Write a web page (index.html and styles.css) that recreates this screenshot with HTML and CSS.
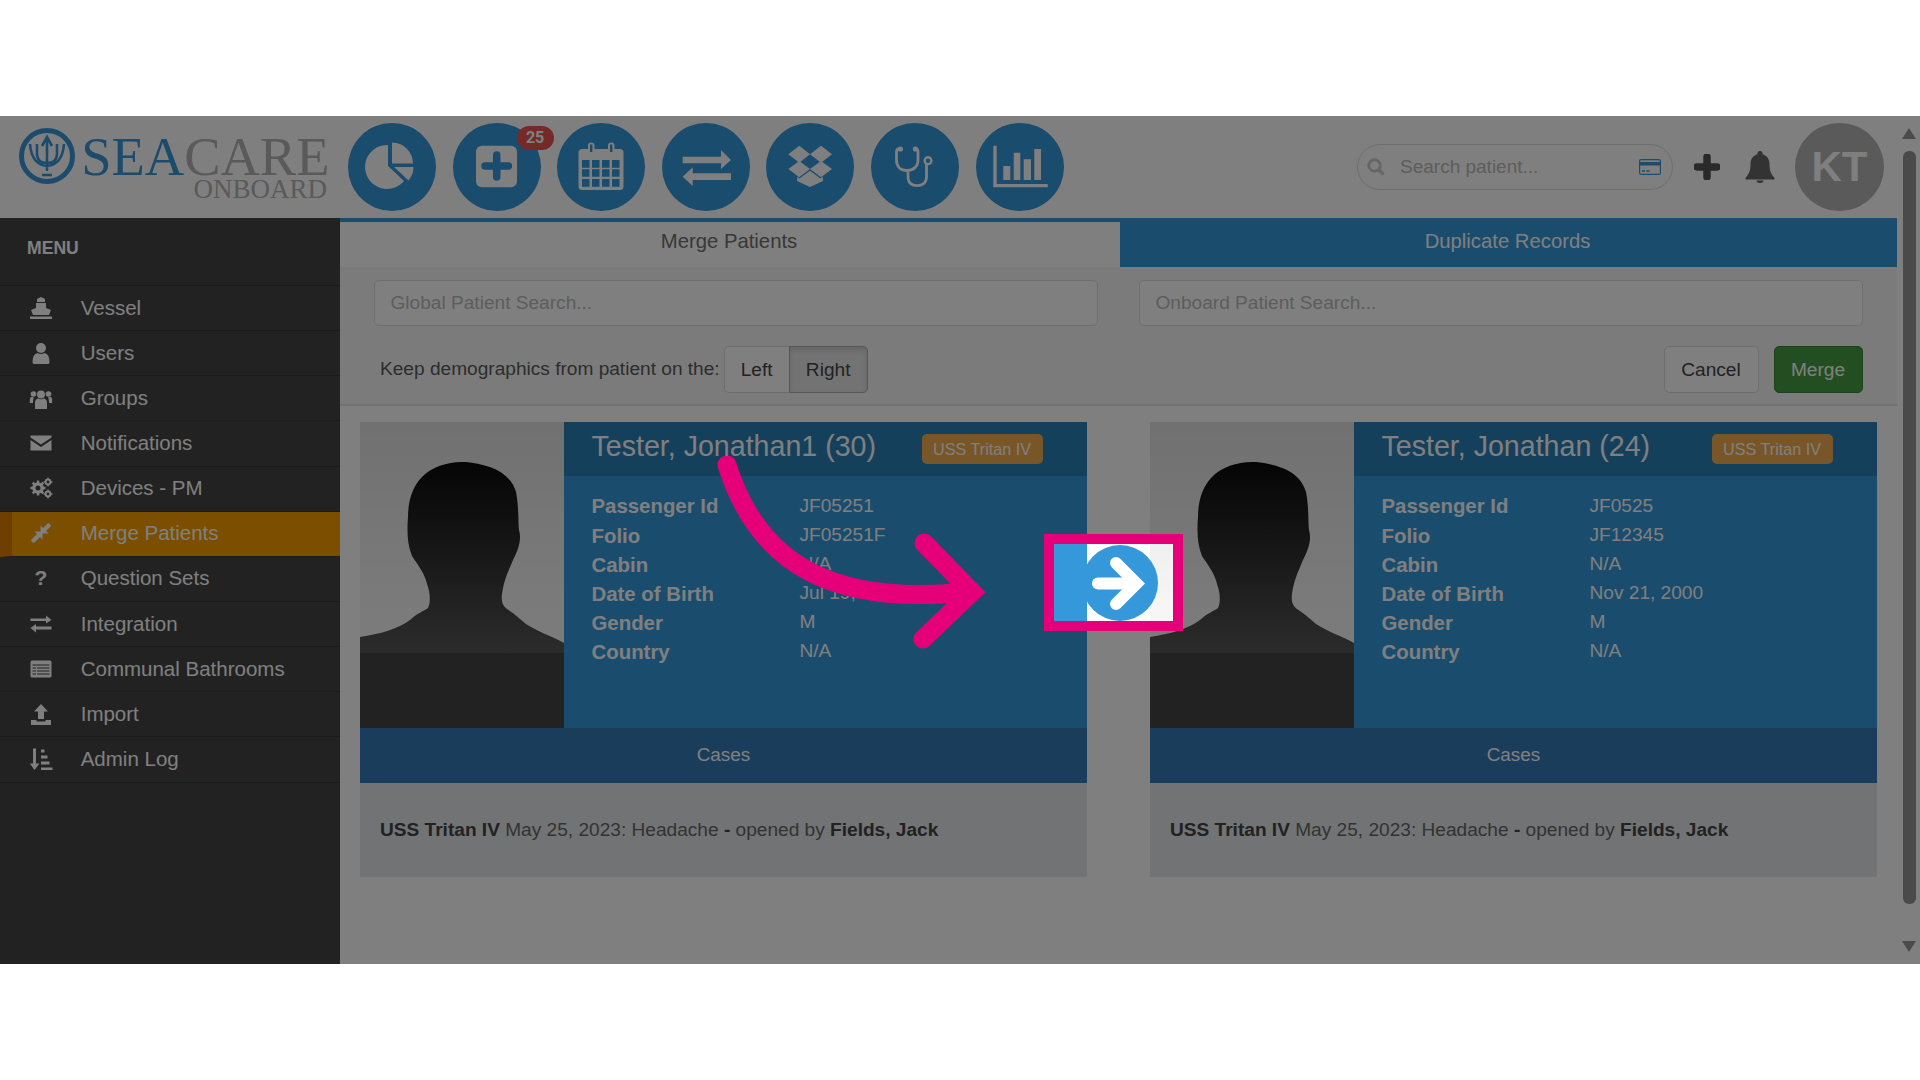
FILE: index.html
```html
<!DOCTYPE html>
<html lang="en">
<head>
    <meta charset="UTF-8">
    <title>Merge Patients</title>
    <link rel="stylesheet" href="styles.css">
</head>
<body>
<div class="frame">
    <div class="page">
        <header class="topbar">
            <div class="logo">
                <svg class="logo-mark" viewBox="0 0 58 58" width="58" height="58">
                    <circle cx="29" cy="29" r="25.5" fill="none" stroke="#3a96d6" stroke-width="5"/>
                    <path d="M29 44V11M24 19l5-9 5 9M19 17v10c0 6 4 9 10 9s10-3 10-9V17M12 17c1 13 6 21 17 22 11-1 16-9 17-22M24 48h10" fill="none" stroke="#3a96d6" stroke-width="2.6"/>
                </svg>
                <div class="logo-text">
                    <div class="logo-name"><span class="logo-sea">SEA</span>CARE</div>
                    <div class="logo-sub">ONBOARD</div>
                </div>
            </div>
            <nav class="nav-btns">
                <a class="nav-btn">
                    <svg viewBox="0 0 88 88"><path d="M40 22A22 22 0 1 0 56 58L40 43Z" fill="#fff"/><path d="M44 19.5A21 21 0 0 1 65 40.5H44Z" fill="#fff"/><path d="M46 44H65.5A21 21 0 0 1 60.5 57.5Z" fill="#fff"/></svg>
                </a>
                <a class="nav-btn">
                    <svg viewBox="0 0 88 88"><rect x="23" y="22.7" width="41" height="41.6" rx="6" fill="#fff"/><path d="M43.7 32v22M32 43h23.400" stroke="#3498db" stroke-width="7.500" stroke-linecap="round"/></svg>
                    <span class="nav-badge">25</span>
                </a>
                <a class="nav-btn">
                    <svg viewBox="0 0 88 88">
                        <rect x="21.500" y="26" width="45" height="41" rx="3.500" fill="#fff"/>
                        <rect x="31" y="19.500" width="6.500" height="11.500" rx="3.200" fill="#fff"/>
                        <rect x="51" y="19.500" width="6.500" height="11.500" rx="3.200" fill="#fff"/>
                        <rect x="33" y="21.500" width="2.400" height="7.500" fill="#3498db"/>
                        <rect x="53" y="21.500" width="2.400" height="7.500" fill="#3498db"/>
                        <path d="M25 37h7.500v7.700H25zM35 37h7.500v7.700H35zM45 37h7.500v7.700H45zM55 37h7.500v7.700H55zM25 46.300h7.500v7.500H25zM35 46.300h7.500v7.500H35zM45 46.300h7.500v7.500H45zM55 46.300h7.500v7.500H55zM25 56h7.500v7.700H25zM35 56h7.500v7.700H35zM45 56h7.500v7.700H45zM55 56h7.500v7.700H55z" fill="#3498db"/>
                    </svg>
                </a>
                <a class="nav-btn">
                    <svg viewBox="0 0 88 88"><path d="M20.700 33.700H59V27L69 37 59 46V40.300H20.700Z" fill="#fff"/><path d="M69 50.300H30.700V44.300L20.700 53.700 30.700 63V57H69Z" fill="#fff"/></svg>
                </a>
                <a class="nav-btn">
                    <svg viewBox="0 0 88 88"><path d="M22.300 31.300 33.300 22.700 44 31.300 33.300 39.700ZM44 31.300 55 22.700 66 31.300 55 39.700ZM22.300 46 33.300 38 44 46 33.300 54.300ZM44 46 55 38 66 46 55 54.300ZM31.300 53.700 33.500 55.500 44 47.700 54.500 55.500 57 53.700V58L44 64 31 58Z" fill="#fff"/></svg>
                </a>
                <a class="nav-btn">
                    <svg viewBox="0 0 88 88">
                        <path d="M29 26H28Q25.500 26 25.500 29V37C25.500 44 30 47.500 36 47.500S47 44 47 37V29Q47 26 44.500 26H44M37 47.500V54C37 60 41 62.700 46 62.700S55.500 60 55.500 54V41" fill="none" stroke="#fff" stroke-width="2.800"/>
                        <circle cx="29.400" cy="26" r="2.600" fill="#fff"/><circle cx="44.400" cy="26" r="2.600" fill="#fff"/>
                        <circle cx="57" cy="37.700" r="3.400" fill="none" stroke="#fff" stroke-width="2.400"/>
                    </svg>
                </a>
                <a class="nav-btn">
                    <svg viewBox="0 0 88 88"><path d="M17.300 22.700H20.700V61H71.700V64.300H17.300ZM27.300 43H34.300V57H27.300ZM37.700 29.700H44.300V57H37.700ZM47.700 36.300H55V57H47.700ZM58.300 26H65V57H58.300Z" fill="#fff"/></svg>
                </a>
            </nav>
            <div class="topbar-right">
                <div class="patient-search">
                    <svg class="search-icon" viewBox="0 0 18 18" width="18" height="18"><circle cx="7.500" cy="7.500" r="5.700" fill="none" stroke="#ccc" stroke-width="3"/><path d="M11.700 11.700 16.500 16.500" stroke="#ccc" stroke-width="3.400"/></svg>
                    <span class="search-text">Search patient...</span>
                    <svg class="card-icon" viewBox="0 0 22 16" width="22" height="16"><rect x=".6" y=".6" width="20.800" height="14.800" rx="1.500" fill="none" stroke="#3498db" stroke-width="1.200"/><rect x="1" y="3" width="20" height="3.500" fill="#3498db"/><path d="M3 12h3M7.500 12h3" stroke="#3498db" stroke-width="1.300"/></svg>
                </div>
                <svg class="plus-icon" viewBox="0 0 26 26" width="26" height="26"><path d="M13 3v20M3 13h20" stroke="#555" stroke-width="7.500" stroke-linecap="round"/></svg>
                <svg class="bell-icon" viewBox="0 0 30 32" width="30" height="32"><path d="M15 0a2.500 2.500 0 0 1 2.500 3.200C22 4.500 24.500 8 24.500 13c0 8 2.500 11 5 14v1.500H.5V27c2.500-3 5-6 5-14 0-5 2.500-8.500 7-9.800A2.500 2.500 0 0 1 15 0ZM11.500 29.500h7a3.500 2.500 0 0 1-7 0Z" fill="#666"/></svg>
                <div class="avatar">KT</div>
            </div>
        </header>

        <div class="main">
            <aside class="sidebar">
                <div class="menu-title">MENU</div>
                <a class="menu-item">
                    <svg viewBox="0 0 24 24"><path d="M12 1l4 2v3H8V3ZM7 7h10v5l5 2-2 5H4l-2-5 5-2Z M1 20.500h22v2.500H1Z" fill="#fff"/></svg>
                    Vessel
                </a>
                <a class="menu-item">
                    <svg viewBox="0 0 24 24"><circle cx="12" cy="7" r="5" fill="#fff"/><path d="M5 23q-1.500 0-1.500-2 0-8 5-9 3 2 7 0 5 1 5 9 0 2-1.500 2Z" fill="#fff"/></svg>
                    Users
                </a>
                <a class="menu-item">
                    <svg viewBox="0 0 24 24"><circle cx="12" cy="8.500" r="4" fill="#fff"/><circle cx="4.500" cy="8" r="2.800" fill="#fff"/><circle cx="19.500" cy="8" r="2.800" fill="#fff"/><path d="M6 23v-6q0-4 3-4.500 3 1.500 6 0 3 .5 3 4.500v6ZM.8 17v-3q0-3 2-3.200 1.200.8 2.200.8-1 1.500-1 4.500v1ZM23.200 17v-3q0-3-2-3.200-1.200.8-2.200.8 1 1.500 1 4.500v1Z" fill="#fff"/></svg>
                    Groups
                </a>
                <a class="menu-item">
                    <svg viewBox="0 0 24 24"><path d="M1.500 4.500h21v2L12 13.500 1.500 6.500ZM1.500 9l10.500 7 10.500-7v10.500h-21Z" fill="#fff"/></svg>
                    Notifications
                </a>
                <a class="menu-item">
                    <svg viewBox="0 0 24 24">
                        <path d="M9 4.500v15M1.500 12h15M3.700 6.700l10.600 10.600M14.300 6.700 3.700 17.300" stroke="#fff" stroke-width="2.400"/>
                        <circle cx="9" cy="12" r="5.800" fill="#fff"/><circle cx="9" cy="12" r="2.500" fill="#444"/>
                        <path d="M19 1.500v9M14.500 6h9M19 13.500v9M14.500 18h9" stroke="#fff" stroke-width="1.400"/>
                        <circle cx="19" cy="6" r="2.400" fill="#444" stroke="#fff" stroke-width="2"/><circle cx="19" cy="18" r="2.400" fill="#444" stroke="#fff" stroke-width="2"/>
                    </svg>
                    Devices - PM
                </a>
                <a class="menu-item active">
                    <svg viewBox="0 0 24 24"><path d="M3 21 2 19l6-6-2.500-2.500h8v8L11 16l-6 6ZM21 3l1 2-5 5 2.500 2.500h-8v-8L14 7l5-5Z" fill="#fff"/></svg>
                    Merge Patients
                </a>
                <a class="menu-item">
                    <span class="menu-glyph">?</span>
                    Question Sets
                </a>
                <a class="menu-item">
                    <svg viewBox="0 0 24 24"><path d="M1.500 6.500H17V3.500L22.500 8 17 11.500V9H1.500ZM22.500 14.500H7V12L1.500 16 7 20.500V17.500H22.500Z" fill="#fff"/></svg>
                    Integration
                </a>
                <a class="menu-item">
                    <svg viewBox="0 0 24 24"><rect x="1.500" y="3.500" width="21" height="17" rx="1.500" fill="#fff"/><path d="M3.500 8h17M3.500 11h3.500M8 11h12.500M3.500 14h3.500M8 14h12.500M3.500 17h3.500M8 17h12.500" stroke="#444" stroke-width="1.200"/></svg>
                    Communal Bathrooms
                </a>
                <a class="menu-item">
                    <svg viewBox="0 0 24 24"><path d="M12 2l7 7.500h-4V17H9V9.500H5Z M2 18h5l1 1.500h8l1-1.500h5v5H2Z" fill="#fff"/></svg>
                    Import
                </a>
                <a class="menu-item">
                    <svg viewBox="0 0 24 24"><path d="M4 1.500h3v15h3.500L5.500 23 .8 16.500H4ZM12 2.500h3.500v3H12ZM12 8.500h6.500v3H12ZM12 14.500h8.500v3H12ZM12 20.500h11.500v2.500H12Z" fill="#fff"/></svg>
                    Admin Log
                </a>
            </aside>

            <section class="content">
                <div class="tabs">
                    <div class="tab tab-on">Merge Patients</div>
                    <div class="tab">Duplicate Records</div>
                </div>
                <div class="toolbar">
                    <div class="search-row">
                        <div class="field">Global Patient Search...</div>
                        <div class="field">Onboard Patient Search...</div>
                    </div>
                    <div class="action-row">
                        <span class="keep-label">Keep demographics from patient on the:</span>
                        <div class="toggle">
                            <span class="toggle-btn">Left</span>
                            <span class="toggle-btn toggle-on">Right</span>
                        </div>
                        <span class="spacer"></span>
                        <button class="btn">Cancel</button>
                        <button class="btn btn-merge">Merge</button>
                    </div>
                </div>

                <div class="cards">
                    <div class="card">
                        <div class="card-top">
                            <svg class="photo" viewBox="0 0 204 306" width="204" height="306">
                                <defs>
                                    <linearGradient id="photoBg" x1="0" y1="0" x2="0" y2="1"><stop offset="0" stop-color="#e2e2e2"/><stop offset=".8" stop-color="#f6f6f6"/></linearGradient>
                                    <linearGradient id="photoFg" x1="0" y1="0" x2="0" y2="1"><stop offset="0" stop-color="#0a0a0a"/><stop offset="1" stop-color="#585858"/></linearGradient>
                                </defs>
                                <rect width="204" height="231" fill="url(#photoBg)"/>
                                <rect y="231" width="204" height="75" fill="#444"/>
                                <path d="M106 40C125 42 150 48 156 70C159 85 158 100 159 108C162 118 158 128 153 138C148 150 144 158 142 172C141 180 143 184 147 187C155 192 160 197 166 202C178 210 192 214 204 221V231H0V215C20 212 38 207 50 198C56 192 64 189 68 186C71 180 70 170 67 162C65 152 58 143 52 134C47 122 47 108 48 95C48 80 52 65 62 55C72 44 90 39 106 40Z" fill="url(#photoFg)"/>
                            </svg>
                            <div class="card-info">
                                <div class="card-head">
                                    <h2 class="card-name">Tester, Jonathan1 (30)</h2>
                                    <span class="ship-badge">USS Tritan IV</span>
                                </div>
                                <dl class="card-rows">
                                    <dt>Passenger Id</dt><dd>JF05251</dd>
                                    <dt>Folio</dt><dd>JF05251F</dd>
                                    <dt>Cabin</dt><dd>N/A</dd>
                                    <dt>Date of Birth</dt><dd>Jul 19, 1990</dd>
                                    <dt>Gender</dt><dd>M</dd>
                                    <dt>Country</dt><dd>N/A</dd>
                                </dl>
                            </div>
                        </div>
                        <div class="cases-bar">Cases</div>
                        <div class="cases-list"><b>USS Tritan IV</b> May 25, 2023: Headache <b>-</b> opened by <b>Fields, Jack</b></div>
                    </div>

                    <div class="merge-arrow">
                        <svg viewBox="0 0 76 76" width="76" height="76"><circle cx="38" cy="38" r="38" fill="#3498db"/><path d="M16 38.500H54" stroke="#fff" stroke-width="12" stroke-linecap="round"/><path d="M34 18 54.500 38.500 34 59" fill="none" stroke="#fff" stroke-width="12" stroke-linecap="round"/></svg>
                    </div>

                    <div class="card">
                        <div class="card-top">
                            <svg class="photo" viewBox="0 0 204 306" width="204" height="306">
                                <rect width="204" height="231" fill="url(#photoBg)"/>
                                <rect y="231" width="204" height="75" fill="#444"/>
                                <path d="M106 40C125 42 150 48 156 70C159 85 158 100 159 108C162 118 158 128 153 138C148 150 144 158 142 172C141 180 143 184 147 187C155 192 160 197 166 202C178 210 192 214 204 221V231H0V215C20 212 38 207 50 198C56 192 64 189 68 186C71 180 70 170 67 162C65 152 58 143 52 134C47 122 47 108 48 95C48 80 52 65 62 55C72 44 90 39 106 40Z" fill="url(#photoFg)"/>
                            </svg>
                            <div class="card-info">
                                <div class="card-head">
                                    <h2 class="card-name">Tester, Jonathan (24)</h2>
                                    <span class="ship-badge">USS Tritan IV</span>
                                </div>
                                <dl class="card-rows">
                                    <dt>Passenger Id</dt><dd>JF0525</dd>
                                    <dt>Folio</dt><dd>JF12345</dd>
                                    <dt>Cabin</dt><dd>N/A</dd>
                                    <dt>Date of Birth</dt><dd>Nov 21, 2000</dd>
                                    <dt>Gender</dt><dd>M</dd>
                                    <dt>Country</dt><dd>N/A</dd>
                                </dl>
                            </div>
                        </div>
                        <div class="cases-bar">Cases</div>
                        <div class="cases-list"><b>USS Tritan IV</b> May 25, 2023: Headache <b>-</b> opened by <b>Fields, Jack</b></div>
                    </div>
                </div>
            </section>
        </div>
    </div>

    <div class="scrollbar">
        <span class="scroll-up"></span>
        <span class="scroll-thumb"></span>
        <span class="scroll-down"></span>
    </div>

    <!-- guide highlight over the dimmed page -->
    <div class="spotlight"></div>
    <svg class="guide-arrow" viewBox="700 456 300 200" width="300" height="200">
        <path d="M727 465C760 570 840 605 966 592M924 543 972 592 923 639" fill="none" stroke="#e5007a" stroke-width="19" stroke-linecap="round" stroke-linejoin="miter"/>
    </svg>
</div>
</body>
</html>
```

FILE: styles.css
```css
* {
    box-sizing: border-box;
}
body {
    margin: 0;
    height: 1080px;
    overflow: hidden;
    background-color: #fff;
    font-family: "Liberation Sans", Arial, sans-serif;
    font-size: 19.1px;
    color: #666;
}
.frame {
    position: relative;
    display: flex;
    height: 848px;
    margin-top: 116px;
    overflow: hidden;
    background-color: #fff;
}
.page {
    flex: 1;
    min-width: 0;
    display: flex;
    flex-direction: column;
}

/* top bar */
.topbar {
    display: flex;
    align-items: center;
    height: 102px;
    flex: none;
}
.logo {
    display: flex;
    width: 348px;
    height: 88px;
    padding: 5.5px 0 0 18px;
    flex: none;
}
.logo-mark {
    flex: none;
    margin-top: -2px;
}
.logo-text {
    width: 251px;
    text-align: right;
    font-family: "Liberation Serif", "Times New Roman", serif;
    color: #b4b4b4;
}
.logo-name {
    margin-right: -2.5px;
    font-size: 54.5px;
    line-height: 56px;
    white-space: nowrap;
}
.logo-sea {
    color: #3a96d6;
}
.logo-sub {
    margin-top: -6.5px;
    font-size: 27px;
    line-height: 22px;
}
.nav-btns {
    display: flex;
    gap: 16.6px;
}
.nav-btn {
    position: relative;
    display: block;
    width: 88px;
    height: 88px;
    border-radius: 50%;
    background-color: #3498db;
}
.nav-btn svg {
    display: block;
    width: 88px;
    height: 88px;
}
.nav-badge {
    position: absolute;
    top: 3px;
    left: 64px;
    width: 37px;
    height: 24px;
    border-radius: 12px;
    background-color: #e85550;
    color: #fff;
    font-family: Roboto, sans-serif;
    font-size: 16px;
    font-weight: bold;
    line-height: 24px;
    text-align: center;
}
.topbar-right {
    display: flex;
    align-items: center;
    margin-left: auto;
    padding-right: 13px;
}
.patient-search {
    display: flex;
    align-items: center;
    width: 316px;
    height: 46px;
    padding: 0 11px 0 9px;
    border: 1px solid #ddd;
    border-radius: 23px;
}
.search-text {
    flex: 1;
    margin-left: 15px;
    font-size: 19px;
    color: #bbb;
}
.plus-icon {
    margin-left: 21px;
}
.bell-icon {
    margin-left: 25px;
}
.avatar {
    width: 89px;
    height: 88px;
    margin-left: 20px;
    border-radius: 50%;
    background-color: #b4b4b4;
    color: #fff;
    font-size: 42px;
    font-weight: bold;
    line-height: 88px;
    text-align: center;
}

/* sidebar */
.main {
    flex: 1;
    display: flex;
    min-height: 0;
}
.sidebar {
    width: 340px;
    flex: none;
    background-color: #444;
}
.menu-title {
    height: 68px;
    padding: 20px 0 0 27px;
    border-bottom: 1px solid #383838;
    color: #fff;
    font-size: 17.6px;
    font-weight: bold;
}
.menu-item {
    display: flex;
    align-items: center;
    height: 45.15px;
    padding-left: 29px;
    padding-bottom: 1px;
    border-bottom: 1px solid #383838;
    color: #fff;
    font-size: 20.5px;
}
.menu-item svg, .menu-glyph {
    width: 24px;
    height: 24px;
    margin-right: 27.7px;
    flex: none;
}
.menu-glyph {
    font-size: 21px;
    font-weight: bold;
    line-height: 24px;
    text-align: center;
}
.menu-item.active {
    padding-left: 17px;
    border-left: 12px solid #dc7e00;
    background-color: #f89c00;
}

/* content */
.content {
    flex: 1;
    min-width: 0;
    background-color: #fff;
}
.tabs {
    display: flex;
    height: 49px;
    border-top: 4px solid #3498db;
}
.tab {
    flex: 1;
    padding: 8px 2px 0 0;
    background-color: #3498db;
    color: #fff;
    font-size: 20.3px;
    text-align: center;
}
.tab-on {
    flex: none;
    width: 780px;
    background-color: #fff;
    color: #707070;
}
.toolbar {
    height: 139px;
    padding: 13px 34.5px 0 33.5px;
    border-bottom: 2px solid #e2e2e2;
    background-color: #f7f7f7;
}
.search-row {
    display: flex;
    gap: 41px;
}
.field {
    flex: 1;
    height: 46px;
    padding-left: 16px;
    border: 1px solid #ddd;
    border-radius: 5px;
    background-color: #fff;
    color: #bbb;
    line-height: 43px;
}
.action-row {
    display: flex;
    align-items: center;
    height: 47px;
    margin-top: 20px;
}
.keep-label {
    padding-left: 6.5px;
    margin-right: 4px;
    padding-bottom: 2px;
    color: #5a5a5a;
}
.toggle {
    display: flex;
    height: 47px;
}
.toggle-btn {
    width: 65px;
    border: 1px solid #ddd;
    color: #444;
    line-height: 45px;
    text-align: center;
}
.toggle-btn:first-child {
    border-radius: 5px 0 0 5px;
    border-right: none;
    background-color: #fff;
}
.toggle-on {
    width: 79px;
    border-color: #adadad;
    border-radius: 0 5px 5px 0;
    background-color: #e6e6e6;
    box-shadow: inset 0 3px 5px rgba(0,0,0,.125);
}
.spacer {
    flex: 1;
}
.btn {
    width: 95px;
    height: 47px;
    padding: 0;
    border: 1px solid #ddd;
    border-radius: 5px;
    background-color: #fff;
    color: #444;
    font: inherit;
}
.btn-merge {
    width: 89px;
    margin-left: 15px;
    border-color: #398439;
    background-color: #449d44;
    color: #fff;
}

/* patient cards */
.cards {
    position: relative;
    display: flex;
    gap: 63px;
    padding: 16px 20px 0;
}
.card {
    width: 727px;
    background-color: #e5e7e9;
}
.card-top {
    display: flex;
    height: 306px;
    background-color: #3498db;
}
.photo {
    display: block;
    flex: none;
}
.card-info {
    flex: 1;
}
.card-head {
    display: flex;
    align-items: center;
    height: 54px;
    padding-left: 27.5px;
    background-color: #2980b9;
    color: #fff;
}
.card-name {
    width: 330px;
    margin: 0 0 6px;
    font-size: 28.6px;
    font-weight: normal;
    white-space: nowrap;
}
.ship-badge {
    width: 121px;
    height: 30px;
    border-radius: 5px;
    background-color: #f0ad4e;
    font-size: 16.2px;
    line-height: 30px;
    text-align: center;
}
.card-rows {
    display: grid;
    grid-template-columns: 208px 1fr;
    grid-auto-rows: 29.1px;
    align-items: center;
    margin: 0;
    padding: 16.4px 0 0 27.5px;
    color: #fff;
}
.card-rows dt {
    font-weight: bold;
    font-size: 20.4px;
}
.card-rows dd {
    margin: 0 0 2px;
}
.cases-bar {
    height: 55px;
    background-color: #337ab7;
    color: #fff;
    font-size: 18.9px;
    line-height: 53px;
    text-align: center;
}
.cases-list {
    height: 94px;
    padding: 0 0 2px 20px;
    line-height: 93px;
    color: #666;
}
.cases-list b {
    color: #444;
}
.merge-arrow {
    position: absolute;
    top: 139px;
    left: 742px;
    width: 76px;
    height: 76px;
}
.merge-arrow svg {
    display: block;
}

/* scrollbar */
.scrollbar {
    position: relative;
    width: 23px;
    flex: none;
    display: flex;
    flex-direction: column;
    align-items: center;
    padding-left: 1px;
    background-color: #fff;
}
.scroll-up, .scroll-down {
    width: 0;
    height: 0;
    border-left: 7.5px solid transparent;
    border-right: 7.5px solid transparent;
}
.scroll-up {
    margin-top: 12px;
    border-bottom: 11px solid #949494;
}
.scroll-thumb {
    width: 13px;
    height: 753px;
    margin-top: 12px;
    border-radius: 6px;
    background-color: #949494;
}
.scroll-down {
    margin-top: 37px;
    border-top: 11px solid #949494;
}

/* guide highlight */
.spotlight {
    position: absolute;
    top: 428px;
    left: 1054px;
    width: 119px;
    height: 77px;
    outline: 10px solid #e5007a;
    box-shadow: 0 0 0 3000px rgba(0,0,0,.5);
}
.guide-arrow {
    position: absolute;
    top: 340px;
    left: 700px;
}
```
